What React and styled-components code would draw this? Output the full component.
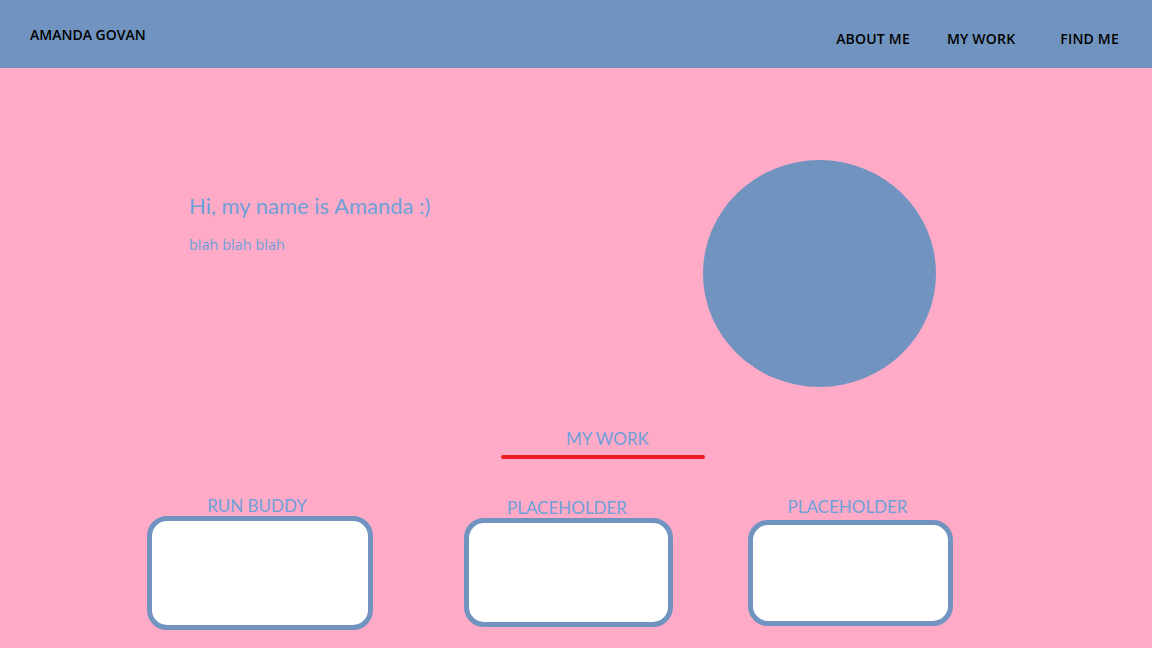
import styled, { createGlobalStyle } from 'styled-components'

const GlobalStyle = createGlobalStyle`
  html, body {
    margin: 0;
    padding: 0;
    background: #ffabc8;
  }
  body {
    font-family: 'Open Sans', 'Liberation Sans', sans-serif;
  }
`

const Page = styled.div`
  width: 1152px;
  height: 648px;
  overflow: hidden;
  background: #ffabc8;
`

const Header = styled.header`
  height: 68px;
  background: #7094bf;
  display: flex;
  align-items: center;
  justify-content: space-between;
  padding: 0 33px 0 30px;
  box-sizing: border-box;
`

const Logo = styled.div`
  font-family: 'Open Sans', sans-serif;
  font-size: 14px;
  font-weight: 600;
  color: #000;
  margin-top: 1px;
`

const Nav = styled.nav`
  display: flex;
  align-items: center;
  margin-top: 8px;
`

const NavLink = styled.a`
  font-family: 'Open Sans', sans-serif;
  font-size: 14px;
  font-weight: 600;
  letter-spacing: 0.2px;
  color: #000;
  text-decoration: none;
  margin-left: ${p => p.$gap || 0}px;
`

const Hero = styled.section`
  display: flex;
  align-items: flex-start;
  padding: 92px 0 0 189px;
  height: 360px;
  box-sizing: border-box;
`

const Intro = styled.div`
  width: 514px;
  margin-top: 31px;
`

const Greeting = styled.h1`
  margin: 0;
  font-family: Lato, sans-serif;
  font-weight: 400;
  font-size: 22px;
  line-height: 30px;
  color: #6ea0d8;
`

const Blurb = styled.p`
  margin: 14px 0 0;
  font-family: 'Open Sans', sans-serif;
  font-size: 14.5px;
  line-height: 20px;
  color: #6ea0d8;
`

const Avatar = styled.div`
  width: 233px;
  height: 227px;
  border-radius: 50%;
  background: #7094bf;
`

const Work = styled.section`
  display: flex;
  flex-direction: column;
  align-items: flex-start;
`

const WorkTitle = styled.h2`
  margin: 0 0 0 566px;
  font-family: Lato, sans-serif;
  font-weight: 400;
  font-size: 17px;
  color: #6ea0d8;
  line-height: 22px;
`

const Underline = styled.div`
  margin: 5px 0 0 501px;
  width: 204px;
  height: 4px;
  border-radius: 2px;
  background: #ed1c24;
`

const Cards = styled.div`
  display: flex;
  align-items: flex-start;
  margin-top: 37px;
`

const Card = styled.div`
  display: flex;
  flex-direction: column;
  align-items: center;
  margin-left: ${p => p.$left}px;
  margin-top: ${p => p.$top}px;
`

const CardLabel = styled.div`
  font-family: Lato, sans-serif;
  font-size: 17px;
  color: #6ea0d8;
  line-height: 20px;
  margin-left: ${p => p.$shift || 0}px;
`

const CardBox = styled.div`
  width: ${p => p.$w}px;
  height: ${p => p.$h}px;
  margin-top: ${p => p.$gap}px;
  background: #fff;
  border: 5px solid #7094bf;
  border-radius: 20px;
  box-sizing: border-box;
`

export default function App() {
  return (
    <Page>
      <GlobalStyle />
      <Header>
        <Logo>AMANDA GOVAN</Logo>
        <Nav>
          <NavLink href="#about">ABOUT ME</NavLink>
          <NavLink href="#work" $gap={37}>MY WORK</NavLink>
          <NavLink href="#find" $gap={45}>FIND ME</NavLink>
        </Nav>
      </Header>
      <Hero>
        <Intro>
          <Greeting>Hi, my name is Amanda :)</Greeting>
          <Blurb>blah blah blah</Blurb>
        </Intro>
        <Avatar />
      </Hero>
      <Work>
        <WorkTitle>MY WORK</WorkTitle>
        <Underline />
        <Cards>
          <Card $left={147} $top={0}>
            <CardLabel $shift={-6}>RUN BUDDY</CardLabel>
            <CardBox $w={226} $h={114} $gap={0} />
          </Card>
          <Card $left={91} $top={2}>
            <CardLabel $shift={-3}>PLACEHOLDER</CardLabel>
            <CardBox $w={209} $h={109} $gap={0} />
          </Card>
          <Card $left={75} $top={1}>
            <CardLabel $shift={-6}>PLACEHOLDER</CardLabel>
            <CardBox $w={205} $h={106} $gap={3} />
          </Card>
        </Cards>
      </Work>
    </Page>
  )
}
